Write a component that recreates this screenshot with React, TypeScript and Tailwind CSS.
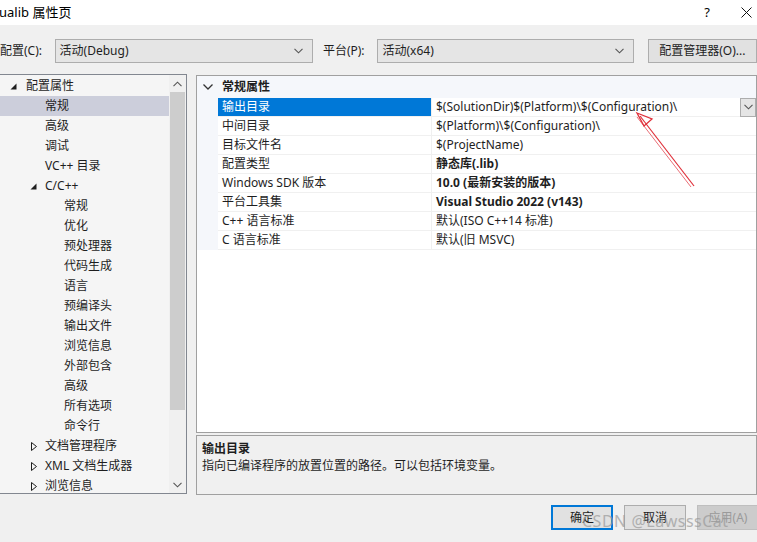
import { useState } from "react";

type TreeItem = { label: string; level: number; toggle?: "open" | "closed" };

const treeItems: TreeItem[] = [
  { label: "配置属性", level: 0, toggle: "open" },
  { label: "常规", level: 1 },
  { label: "高级", level: 1 },
  { label: "调试", level: 1 },
  { label: "VC++ 目录", level: 1 },
  { label: "C/C++", level: 1, toggle: "open" },
  { label: "常规", level: 2 },
  { label: "优化", level: 2 },
  { label: "预处理器", level: 2 },
  { label: "代码生成", level: 2 },
  { label: "语言", level: 2 },
  { label: "预编译头", level: 2 },
  { label: "输出文件", level: 2 },
  { label: "浏览信息", level: 2 },
  { label: "外部包含", level: 2 },
  { label: "高级", level: 2 },
  { label: "所有选项", level: 2 },
  { label: "命令行", level: 2 },
  { label: "文档管理程序", level: 1, toggle: "closed" },
  { label: "XML 文档生成器", level: 1, toggle: "closed" },
  { label: "浏览信息", level: 1, toggle: "closed" },
];

const props: { name: string; value: string; bold?: boolean }[] = [
  { name: "输出目录", value: "$(SolutionDir)$(Platform)\\$(Configuration)\\" },
  { name: "中间目录", value: "$(Platform)\\$(Configuration)\\" },
  { name: "目标文件名", value: "$(ProjectName)" },
  { name: "配置类型", value: "静态库(.lib)", bold: true },
  { name: "Windows SDK 版本", value: "10.0 (最新安装的版本)", bold: true },
  { name: "平台工具集", value: "Visual Studio 2022 (v143)", bold: true },
  { name: "C++ 语言标准", value: "默认(ISO C++14 标准)" },
  { name: "C 语言标准", value: "默认(旧 MSVC)" },
];

const Chevron = ({ up = false }: { up?: boolean }) => (
  <svg width="9" height="6" viewBox="0 0 9 6" className={up ? "rotate-180" : ""}>
    <path d="M0.5 0.8 L4.5 4.8 L8.5 0.8" fill="none" stroke="#555" strokeWidth="1.1" />
  </svg>
);

const Toggle = ({ kind }: { kind: "open" | "closed" }) =>
  kind === "open" ? (
    <svg width="7" height="7" viewBox="0 0 7 7">
      <path d="M6.5 0.5 L6.5 6.5 L0.5 6.5 Z" fill="#1e1e1e" />
    </svg>
  ) : (
    <svg width="6" height="9" viewBox="0 0 6 9">
      <path d="M0.5 0.5 L5.5 4.5 L0.5 8.5 Z" fill="none" stroke="#1e1e1e" strokeWidth="1" />
    </svg>
  );

const Select = ({ value, width }: { value: string; width: string }) => (
  <div className={`${width} h-[24px] bg-[#e5e5e5] border border-[#adadad] flex items-center justify-between pl-[4px] pr-[9px]`}>
    <span>{value}</span>
    <Chevron />
  </div>
);

export default function App() {
  const [selected, setSelected] = useState(1);
  const [selectedProp, setSelectedProp] = useState(0);

  return (
    <div
      className="relative w-[757px] h-[542px] overflow-hidden bg-[#f0f0f0] text-[12px] text-[#1e1e1e] flex flex-col"
      style={{ fontFamily: '"Noto Sans", "Noto Sans CJK SC", sans-serif' }}
    >
      {/* Title bar */}
      <div className="h-[25px] bg-white flex items-center shrink-0">
        <span className="ml-[-1px] text-[13px] text-black">ualib 属性页</span>
        <span className="ml-auto mr-[31px] text-[13px] text-black">?</span>
        <svg width="11" height="11" viewBox="0 0 11 11" className="mr-[5px]">
          <path d="M0.5 0.5 L10.5 10.5 M10.5 0.5 L0.5 10.5" stroke="#111" strokeWidth="1" />
        </svg>
      </div>

      {/* Configuration bar */}
      <div className="flex items-center mt-[14px] h-[24px] shrink-0">
        <span className="w-[55px]">配置(C):</span>
        <Select value="活动(Debug)" width="w-[260px]" />
        <span className="ml-[10px] w-[55px]">平台(P):</span>
        <Select value="活动(x64)" width="w-[258px]" />
        <div className="ml-[14px] w-[110px] h-[24px] bg-[#e1e1e1] border border-[#adadad] flex items-center justify-center">
          配置管理器(O)...
        </div>
      </div>

      {/* Main area */}
      <div className="flex mt-[11px] h-[422px] shrink-0">
        {/* Tree */}
        <div className="w-[187px] h-[420px] border border-[#828790] border-l-0 bg-[#f5f5f5] flex">
          <div className="flex-1 pt-[1px] overflow-hidden">
            {treeItems.map((item, i) => (
              <div
                key={i}
                onClick={() => setSelected(i)}
                className={`h-[20px] flex items-center ${i === selected ? "bg-[#cccedb]" : ""}`}
              >
                <div
                  className="flex items-center justify-end shrink-0"
                  style={{ width: item.level === 0 ? 17 : item.level === 1 ? (item.toggle ? 37 : 0) : 0 }}
                >
                  {item.toggle && <Toggle kind={item.toggle} />}
                </div>
                <span
                  className="whitespace-nowrap"
                  style={{
                    marginLeft: item.level === 0 ? 9 : item.level === 1 ? (item.toggle ? 8 : 45) : 64,
                  }}
                >
                  {item.label}
                </span>
              </div>
            ))}
          </div>
          {/* Scrollbar */}
          <div className="w-[17px] bg-[#f0f0f0] flex flex-col items-center">
            <div className="h-[17px] flex items-center justify-center">
              <Chevron up />
            </div>
            <div className="w-[15px] h-[318px] bg-[#cdcdcd]" />
            <div className="flex-1" />
            <div className="h-[17px] flex items-center justify-center">
              <Chevron />
            </div>
          </div>
        </div>

        {/* Right side */}
        <div className="ml-[9px] mt-[1px] flex-1 flex flex-col">
          <div className="h-[358px] border border-[#a0a0a0] bg-white">
            <div className="h-[22px] bg-[#f5f7fb] flex items-center">
              <div className="w-[21px] flex justify-center">
                <svg width="10" height="6" viewBox="0 0 10 6">
                  <path d="M0.5 0.5 L5 5 L9.5 0.5" fill="none" stroke="#333" strokeWidth="1.3" />
                </svg>
              </div>
              <span className="font-bold ml-[4px]">常规属性</span>
            </div>
            {props.map((p, i) => (
              <div key={i} onClick={() => setSelectedProp(i)} className="h-[19px] flex">
                <div className="w-[21px] bg-[#f5f7fb]" />
                <div
                  className={`w-[214px] pl-[4px] flex items-center border-b border-r border-[#f0f0f0] ${
                    i === selectedProp ? "bg-[#0078d7] text-white" : ""
                  }`}
                >
                  {p.name}
                </div>
                <div className={`flex-1 pl-[4px] flex items-center border-b border-[#f0f0f0] ${p.bold ? "font-bold" : ""}`}>
                  <span className="flex-1">{p.value}</span>
                  {i === selectedProp && (
                    <div className="w-[16px] h-[19px] bg-[#e5e5e5] border border-[#adadad] flex items-center justify-center">
                      <Chevron />
                    </div>
                  )}
                </div>
              </div>
            ))}
          </div>
          <div className="mt-[2px] h-[60px] border border-[#a0a0a0] px-[5px] pt-[4px] leading-[17px]">
            <div className="font-bold">输出目录</div>
            <div>指向已编译程序的放置位置的路径。可以包括环境变量。</div>
          </div>
        </div>
      </div>

      {/* Buttons */}
      <div className="flex justify-end gap-[11px] mt-[9px] mr-[-2px]">
        <div className="w-[62px] h-[25px] border-2 border-[#0078d7] bg-[#e1e1e1] flex items-center justify-center">
          确定
        </div>
        <div className="w-[62px] h-[25px] border border-[#adadad] bg-[#e1e1e1] flex items-center justify-center">
          取消
        </div>
        <div className="w-[62px] h-[25px] border border-[#bfbfbf] bg-[#cccccc] text-[#9a9a9a] flex items-center justify-center">
          应用(A)
        </div>
      </div>

      {/* Annotation arrow */}
      <svg className="absolute left-0 top-0 pointer-events-none" width="757" height="542">
        <path d="M694 186 L640 116" stroke="#e0303a" strokeWidth="1.2" fill="none" />
        <path d="M691 187 L637 117" stroke="#e0303a" strokeWidth="1" fill="none" opacity="0.7" />
        <path d="M637 113 L652 119 L644 126 Z" fill="none" stroke="#e0303a" strokeWidth="1.3" />
      </svg>

      {/* Watermark */}
      <div className="absolute left-[582px] top-[509px] text-[16px] text-[#9a9a9a] opacity-70 pointer-events-none tracking-[0.5px]">
        CSDN @LawsssCat
      </div>
    </div>
  );
}
